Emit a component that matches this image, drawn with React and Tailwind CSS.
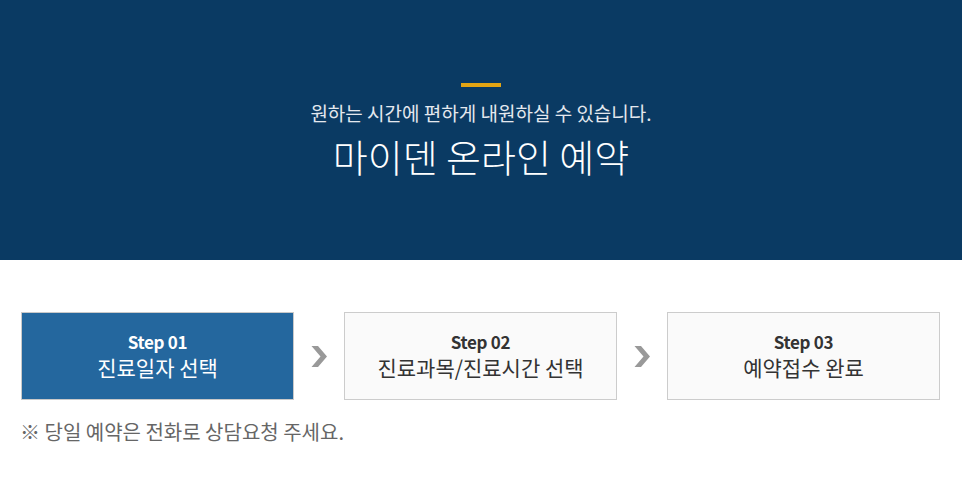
export default function App() {
  const steps = [
    { step: "Step 01", label: "진료일자 선택", active: true },
    { step: "Step 02", label: "진료과목/진료시간 선택" },
    { step: "Step 03", label: "예약접수 완료" },
  ];

  return (
    <div
      className="w-[962px] h-[483px] bg-white"
      style={{ fontFamily: '"Noto Sans CJK KR", "Noto Sans", sans-serif' }}
    >
      {/* Visual header */}
      <div className="h-[260px] bg-[#0a3a63] flex flex-col items-center pt-[83px]">
        <span className="block w-10 h-1 bg-[#e3a514]" />
        <p className="mt-[13px] text-[19px] leading-[26px] text-[#e4e8ee]">
          원하는 시간에 편하게 내원하실 수 있습니다.
        </p>
        <h1 className="mt-[6px] text-[38px] leading-[48px] font-light text-white">
          마이덴 온라인 예약
        </h1>
      </div>

      {/* Steps */}
      <div className="px-[21px] pt-[52px]">
        <div className="flex items-center justify-between w-[919px]">
          {steps.map((s, i) => (
            <div key={s.step} className="contents">
              {i > 0 && (
                <svg width="16" height="21" viewBox="0 0 16 21" className="shrink-0">
                  <path d="M0.5 0h6.5l9 10.5L7 21H0.5l9-10.5z" fill="#999999" />
                </svg>
              )}
              <div
                className={`w-[273px] h-[88px] border flex flex-col items-center justify-center ${
                  s.active
                    ? "bg-[#24679e] border-[#c9c9c9] text-white"
                    : "bg-[#fafafa] border-[#cccccc] text-[#333333]"
                }`}
              >
                <span className="text-[17px] leading-[22px] font-bold tracking-[-0.3px]">
                  {s.step}
                </span>
                <span className="text-[21px] leading-[28px]">
                  {s.label}
                </span>
              </div>
            </div>
          ))}
        </div>
        <p className="mt-[19px] -ml-px text-[20px] leading-[26px] text-[#666666]">
          ※ 당일 예약은 전화로 상담요청 주세요.
        </p>
      </div>
    </div>
  );
}
